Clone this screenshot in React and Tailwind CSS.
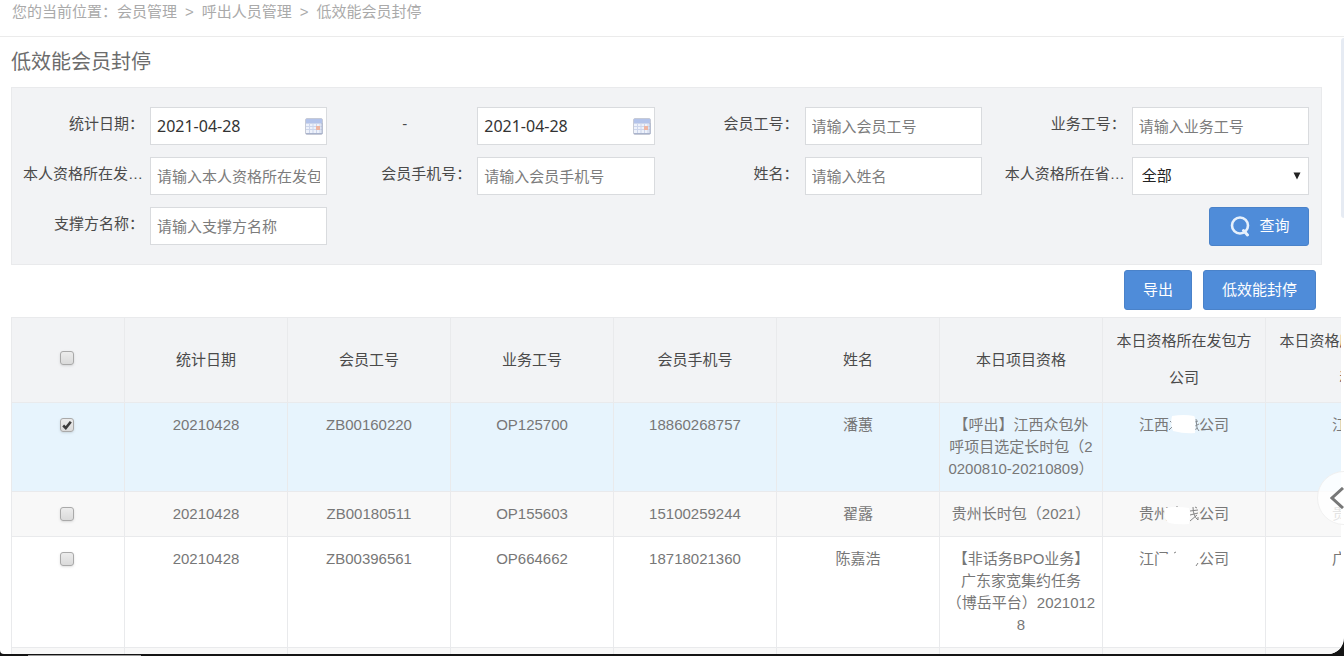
import React, { useState } from 'react';
import clsx from 'clsx';

const breadcrumb = ['会员管理', '呼出人员管理', '低效能会员封停'];

const columns = ['统计日期', '会员工号', '业务工号', '会员手机号', '姓名', '本日项目资格', '本日资格所在发包方公司', '本日资格所在省份名称'];

const rows = [
  {
    date: '20210428',
    member: 'ZB00160220',
    business: 'OP125700',
    phone: '18860268757',
    name: '潘蕙',
    project: ['【呼出】江西众包外', '呼项目选定长时包（2', '0200810-20210809）'],
    company: '江西',
    mask: 'first',
    province: '江西',
  },
  {
    date: '20210428',
    member: 'ZB00180511',
    business: 'OP155603',
    phone: '15100259244',
    name: '翟露',
    project: ['贵州长时包（2021）'],
    company: '贵州',
    mask: 'second',
    province: '贵州',
  },
  {
    date: '20210428',
    member: 'ZB00396561',
    business: 'OP664662',
    phone: '18718021360',
    name: '陈嘉浩',
    project: ['【非话务BPO业务】', '广东家宽集约任务', '（博岳平台）2021012', '8'],
    company: '江门',
    mask: 'third',
    province: '广东',
  },
];

const CalendarIcon = () => (
  <svg width="18" height="17" viewBox="0 0 18 17" aria-hidden="true">
    <rect x="0.5" y="0.5" width="17" height="16" rx="1.5" fill="#eef2fb" stroke="#c6cad6" />
    <rect x="1" y="1" width="16" height="4" fill="#b3c3ea" />
    <path d="M1 5.5h16M1 8.5h16M1 11.5h16M4.5 5v10M8 5v10M11.5 5v10M15 5v10" stroke="#cdd6ec" />
    <rect x="11" y="8" width="4" height="4" fill="#eeb5a2" />
    <path d="M1 15.5h16M17 5v11" stroke="#a9b3cc" />
  </svg>
);

const SearchIcon = () => (
  <svg width="20" height="21" viewBox="0 0 20 21" fill="none" stroke="#e6f0fc" strokeLinecap="round" aria-hidden="true">
    <circle cx="10" cy="9.5" r="8" strokeWidth="2.6" />
    <path d="M13.5 14.5l4 4.5" strokeWidth="3" />
  </svg>
);

// Blot covering the middle of the company name
const Mask = ({ type }) => (
  <svg className="inline-block h-[22px] w-[30px] overflow-visible align-top" viewBox="0 0 30 22" aria-hidden="true">
    {type === 'first' && (
      <>
        <path d="M1 7l2 2M0 16l3-3M26 8l3-1M26 12l4-2M25 16l4-2M27 5l1 9 2 3" stroke="#858b90" fill="none" />
        <path d="M3 2q12-2 22 0q2 1 1 17q-10 1-22-2q-3-7-1-15z" fill="#fff" />
      </>
    )}
    {type === 'second' && (
      <>
        <path d="M7 4h2M21 8l8-1M21 12l8-2M24 4q0 9 5 13v-3M28 12l-7 6M26 4l2 1" stroke="#858585" fill="none" />
        <path d="M-4 5q12-2 24 0q2 6 0 16q-11 1-20-1q-7-5-4-15z" fill="#fff" />
      </>
    )}
    {type === 'third' && (
      <>
        <path d="M-11 9L-2 6L12 8L27 12L26 22L-11 22z" fill="#fff" />
        <path d="M5 5l2-1M27 18l2-3" stroke="#858585" fill="none" />
      </>
    )}
  </svg>
);

const Checkbox = ({ label, checked, onChange }) => (
  <label className="relative mx-auto block size-[14px]">
    <input
      type="checkbox"
      aria-label={label}
      checked={checked}
      onChange={onChange}
      className="block size-[14px] appearance-none rounded-[3px] border border-[#a9a9a9] bg-gradient-to-b from-[#ececec] to-[#dadada] shadow-sm"
    />
    {checked && (
      <svg className="pointer-events-none absolute inset-0" width="14" height="14" viewBox="0 0 14 14" fill="none">
        <path d="M3.2 7.5L5.8 10L10.8 3.8" stroke="#3c3c3c" strokeWidth="2.6" />
      </svg>
    )}
  </label>
);

const Field = ({ id, label, dash, children }) => (
  <div className="flex items-start pr-3 pl-[11px]">
    <label
      htmlFor={id}
      className={clsx('mr-[6px] w-[121px] shrink-0 truncate leading-[34px] text-[#4a4a4a]', dash ? 'pr-3 text-center' : 'text-right')}
    >
      {label}
    </label>
    {children}
  </div>
);

const inputClass = 'h-[38px] w-full min-w-0 flex-1 border border-[#d9dbde] bg-white px-[6px] text-[#333] placeholder-[#7c7c7c] outline-none focus:border-[#4f8cd9]';

const TextField = ({ id, label, placeholder }) => (
  <Field id={id} label={label}>
    <input id={id} type="text" placeholder={placeholder} className={inputClass} />
  </Field>
);

const DateField = ({ id, label, dash }) => {
  const [value, setValue] = useState('2021-04-28');

  return (
    <Field id={id} label={label} dash={dash}>
      <div className="relative flex min-w-0 flex-1">
        <input
          id={id}
          type="text"
          value={value}
          onChange={(e) => setValue(e.target.value)}
          className={clsx(inputClass, "font-['Noto_Sans','Noto_Sans_CJK_SC',sans-serif] text-[16px]")}
        />
        <button type="button" aria-label="选择日期" className="absolute inset-y-0 right-1 flex items-center">
          <CalendarIcon />
        </button>
      </div>
    </Field>
  );
};

const buttonClass = 'flex items-center justify-center gap-[9px] rounded-[3px] border border-[#4a82c9] bg-[#4f8cd9] text-white hover:bg-[#427fcc]';

const App = () => {
  const [selected, setSelected] = useState([0]);

  const toggle = (i) => {
    setSelected(selected.includes(i) ? selected.filter((s) => s !== i) : [...selected, i]);
  };

  const toggleAll = () => {
    setSelected(selected.length === rows.length ? [] : rows.map((_, i) => i));
  };

  return (
    <div className="h-screen overflow-hidden bg-[#141414] pb-[2px] font-['Liberation_Sans','Noto_Sans_CJK_SC',sans-serif] text-[15px]">
      <div className="relative flex h-full flex-col overflow-hidden rounded-br-2xl rounded-bl-sm bg-white">
        <nav className="flex h-[37px] shrink-0 items-start border-b border-[#ebebeb] pl-3 leading-6 text-[#aaa]">
          <span>您的当前位置：</span>
          {breadcrumb.map((item, i) => (
            <React.Fragment key={item}>
              {i > 0 && <span className="px-2">&gt;</span>}
              <a href="#">{item}</a>
            </React.Fragment>
          ))}
        </nav>

        <div className="flex min-h-0 flex-1">
          <main className="min-w-0 flex-1 overflow-hidden pl-[11px]">
            <h1 className="text-xl leading-[50px] text-[#6c6c6c]">低效能会员封停</h1>

            <form
              onSubmit={(e) => e.preventDefault()}
              className="mr-[19px] grid grid-cols-4 gap-y-3 border border-[#e9eaec] bg-[#f2f3f5] pt-[19px] pb-[18px]"
            >
              <DateField id="start" label="统计日期：" />
              <DateField id="end" label="-" dash />
              <TextField id="member" label="会员工号：" placeholder="请输入会员工号" />
              <TextField id="business" label="业务工号：" placeholder="请输入业务工号" />
              <TextField id="contractor" label="本人资格所在发包方公司：" placeholder="请输入本人资格所在发包方公司" />
              <TextField id="phone" label="会员手机号：" placeholder="请输入会员手机号" />
              <TextField id="name" label="姓名：" placeholder="请输入姓名" />
              <Field id="province" label="本人资格所在省份名称：">
                <div className="relative flex min-w-0 flex-1">
                  <select id="province" className="h-[38px] w-full appearance-none border border-[#d9dbde] bg-white pl-[9px] text-[#222] outline-none">
                    <option>全部</option>
                  </select>
                  <svg className="pointer-events-none absolute top-[15px] right-2" width="8" height="8" viewBox="0 0 8 8" aria-hidden="true">
                    <path d="M0.5 0.5h7L4 7.5z" fill="#222" />
                  </svg>
                </div>
              </Field>
              <TextField id="support" label="支撑方名称：" placeholder="请输入支撑方名称" />
              <div className="col-span-3 flex justify-end pr-3">
                <button type="submit" className={clsx(buttonClass, 'h-[39px] w-[100px] pl-[2px]')}>
                  <SearchIcon />
                  查询
                </button>
              </div>
            </form>

            <div className="mr-[25px] flex justify-end gap-[11px] pt-[5px] pb-[7px]">
              <button type="button" className={clsx(buttonClass, 'h-10 px-[18px]')}>导出</button>
              <button type="button" className={clsx(buttonClass, 'h-10 px-[18px]')}>低效能封停</button>
            </div>

            <table className="w-[1418px] table-fixed border-collapse text-center text-[#777]">
              <colgroup>
                <col className="w-[113px]" />
                {columns.map((c) => (
                  <col key={c} className="w-[163px]" />
                ))}
              </colgroup>
              <thead>
                <tr className="bg-[#f2f3f5] text-[#4a4a4a]">
                  <th className="border border-[#e9eaec] pr-[2px] pb-1">
                    <Checkbox label="全选" checked={selected.length === rows.length} onChange={toggleAll} />
                  </th>
                  {columns.map((c) => (
                    <th key={c} className="border border-[#e9eaec] px-2 pt-1 pb-[6px] leading-[37px] font-normal">{c}</th>
                  ))}
                </tr>
              </thead>
              <tbody className="leading-[22px]">
                {rows.map((row, i) => (
                  <tr
                    key={row.member}
                    className={clsx(
                      'align-top *:border *:border-[#e9eaec] *:px-1 *:py-[11px]',
                      selected.includes(i) ? 'bg-[#e7f4fd]' : i % 2 ? 'bg-[#f8f8f8]' : 'bg-white'
                    )}
                  >
                    <td>
                      <div className="flex h-[22px] items-center pr-[2px]">
                        <Checkbox label={row.member} checked={selected.includes(i)} onChange={() => toggle(i)} />
                      </div>
                    </td>
                    <td>{row.date}</td>
                    <td>{row.member}</td>
                    <td>{row.business}</td>
                    <td>{row.phone}</td>
                    <td>{row.name}</td>
                    <td>
                      {row.project.map((line) => (
                        <div key={line} className="whitespace-nowrap">{line}</div>
                      ))}
                    </td>
                    <td>
                      <span>{row.company}</span>
                      <Mask type={row.mask} />
                      <span>公司</span>
                    </td>
                    <td>{row.province}</td>
                  </tr>
                ))}
                <tr className="h-[45px] bg-[#f8f8f8] *:border *:border-[#e9eaec]">
                  <td />
                  {columns.map((c) => (
                    <td key={c} />
                  ))}
                </tr>
              </tbody>
            </table>
          </main>

          {/* scroll track */}
          <div className="w-[3px] shrink-0 pt-px">
            <div className="h-[180px] rounded-l-sm bg-[#e6ebf3]" />
          </div>
        </div>

        <button
          type="button"
          aria-label="展开"
          className="absolute -right-[27px] bottom-[129px] flex size-[54px] items-center rounded-full border border-[#f0f0f0] bg-white/80 pl-3"
        >
          <svg width="14" height="22" viewBox="0 0 14 22" fill="none" stroke="#777" strokeWidth="3" aria-hidden="true">
            <path d="M13 1L2 11l11 10" />
          </svg>
        </button>
      </div>
      <div className="ml-7 h-px w-[113px] translate-y-px bg-[#999]" />
    </div>
  );
};

export default App;
